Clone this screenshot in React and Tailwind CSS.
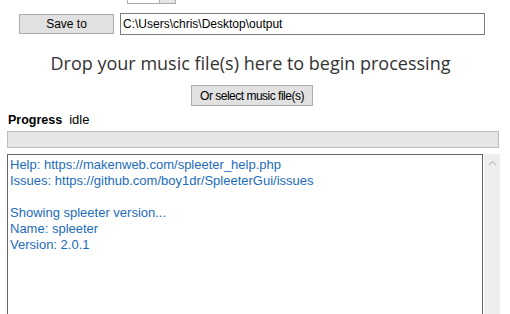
export default function App() {
  const log = [
    'Help: https://makenweb.com/spleeter_help.php',
    'Issues: https://github.com/boy1dr/SpleeterGui/issues',
    '',
    'Showing spleeter version...',
    'Name: spleeter',
    'Version: 2.0.1',
  ];

  return (
    <div className="w-[510px] h-[314px] bg-white overflow-hidden" style={{ fontFamily: '"Liberation Sans", Arial, sans-serif' }}>
      {/* cut-off combo box at the very top */}
      <div className="ml-[127px] w-[49px] h-[4px] flex border-x border-b border-[#adadad]">
        <div className="flex-1" />
        <div className="w-[16px] border-l border-[#adadad] bg-[#e5e5e5]" />
      </div>

      {/* Save to row */}
      <div className="flex items-center mt-[9px]">
        <button className="ml-[19px] w-[95px] h-[20px] bg-[#e1e1e1] border border-[#adadad] text-[12px] text-black leading-none">
          Save to
        </button>
        <div className="ml-[6px] w-[365px] h-[22px] border border-[#7a7a7a] flex items-center pl-[2px] text-[12px] text-black">
          C:\Users\chris\Desktop\output
        </div>
      </div>

      {/* drop area */}
      <div className="w-[501px] text-center mt-[16px] text-[18px] leading-[24px] text-[#333333]" style={{ fontFamily: '"Open Sans", "Noto Sans", sans-serif' }}>
        Drop your music file(s) here to begin processing
      </div>
      <div className="flex mt-[10px]">
        <button className="ml-[191px] w-[122px] h-[21px] bg-[#e1e1e1] border border-[#adadad] text-[12px] tracking-[-0.5px] whitespace-nowrap text-black">
          Or select music file(s)
        </button>
      </div>

      {/* progress */}
      <div className="flex items-baseline ml-[8px] mt-[6px] text-[12px] leading-[16px] text-black">
        <span className="font-bold text-[12.5px]">Progress</span>
        <span className="ml-[7px] text-[13px]">idle</span>
      </div>
      <div className="ml-[7px] w-[492px] h-[17px] mt-[3px] bg-[#e6e6e6] border border-[#bcbcbc]" />

      {/* log */}
      <div className="flex ml-[7px] mt-[6px] h-[170px]">
        <div className="w-[476px] h-full border border-[#646464] pl-[2px] pt-[2px] text-[13px] leading-[16px] text-[#1c6cbb]">
          {log.map((line, i) => (
            <div key={i} className="h-[16px] whitespace-pre">{line}</div>
          ))}
        </div>
        <div className="ml-[1px] w-[16px] h-full bg-[#eeeeee] flex justify-center pt-[6px]">
          <svg width="9" height="6" viewBox="0 0 9 6">
            <path d="M1 5 L4.5 1.5 L8 5" stroke="#c2c2c2" strokeWidth="1.2" fill="none" />
          </svg>
        </div>
      </div>
    </div>
  );
}
